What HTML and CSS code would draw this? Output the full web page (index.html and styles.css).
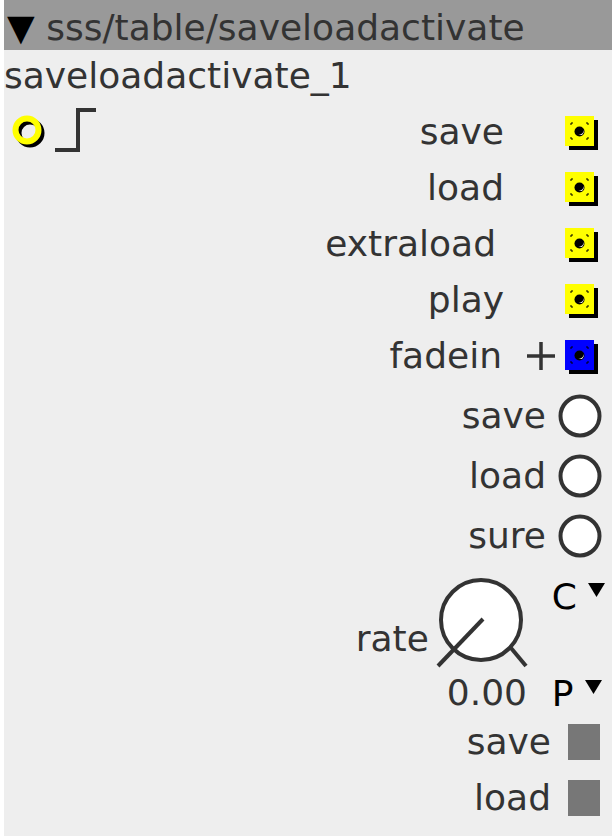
FILE: index.html
```html
<!DOCTYPE html>
<html>
<head>
<meta charset="utf-8">
<link rel="stylesheet" href="styles.css">
</head>
<body>
<div class="panel">
  <div class="header"><span class="tri">▼</span> sss/table/saveloadactivate</div>
  <div class="name">saveloadactivate_1</div>
  <div class="main">
    <div class="left">
      <div class="inlet-row">
        <svg class="inlet" width="42" height="42" viewBox="0 0 42 42">
          <circle cx="20" cy="20" r="11.5" fill="none" stroke="#000" stroke-width="6"/>
          <circle cx="17" cy="17" r="11.5" fill="none" stroke="#ffff00" stroke-width="6"/>
        </svg>
        <svg class="step" width="48" height="48" viewBox="0 0 48 48">
          <path d="M0 44 H23 V4 H41" fill="none" stroke="#333" stroke-width="4"/>
        </svg>
      </div>
    </div>
    <div class="right">
      <div class="orow"><span class="lbl">save</span><span class="plus"></span>
        <svg class="obox" width="34" height="35" viewBox="0 0 34 35"><rect x="4" y="4" width="29" height="30" fill="#000"/><rect x="0" y="0" width="29" height="30" fill="#ffff00"/><path d="M6 9V7H8M21 7H23V9M6 21V23H8M21 23H23V21" fill="none" stroke="#000" stroke-width="1"/><circle cx="14.5" cy="15.5" r="5" fill="#000"/><path d="M13.5 18.5 A3.5 3.5 0 0 0 18.5 14 A4 4 0 0 1 13.5 18.5Z" fill="#fff"/></svg></div>
      <div class="orow"><span class="lbl">load</span><span class="plus"></span>
        <svg class="obox" width="34" height="35" viewBox="0 0 34 35"><rect x="4" y="4" width="29" height="30" fill="#000"/><rect x="0" y="0" width="29" height="30" fill="#ffff00"/><path d="M6 9V7H8M21 7H23V9M6 21V23H8M21 23H23V21" fill="none" stroke="#000" stroke-width="1"/><circle cx="14.5" cy="15.5" r="5" fill="#000"/><path d="M13.5 18.5 A3.5 3.5 0 0 0 18.5 14 A4 4 0 0 1 13.5 18.5Z" fill="#fff"/></svg></div>
      <div class="orow"><span class="lbl lbl-ex">extraload</span><span class="plus"></span>
        <svg class="obox" width="34" height="35" viewBox="0 0 34 35"><rect x="4" y="4" width="29" height="30" fill="#000"/><rect x="0" y="0" width="29" height="30" fill="#ffff00"/><path d="M6 9V7H8M21 7H23V9M6 21V23H8M21 23H23V21" fill="none" stroke="#000" stroke-width="1"/><circle cx="14.5" cy="15.5" r="5" fill="#000"/><path d="M13.5 18.5 A3.5 3.5 0 0 0 18.5 14 A4 4 0 0 1 13.5 18.5Z" fill="#fff"/></svg></div>
      <div class="orow"><span class="lbl">play</span><span class="plus"></span>
        <svg class="obox" width="34" height="35" viewBox="0 0 34 35"><rect x="4" y="4" width="29" height="30" fill="#000"/><rect x="0" y="0" width="29" height="30" fill="#ffff00"/><path d="M6 9V7H8M21 7H23V9M6 21V23H8M21 23H23V21" fill="none" stroke="#000" stroke-width="1"/><circle cx="14.5" cy="15.5" r="5" fill="#000"/><path d="M13.5 18.5 A3.5 3.5 0 0 0 18.5 14 A4 4 0 0 1 13.5 18.5Z" fill="#fff"/></svg></div>
      <div class="orow"><span class="lbl lbl-fd">fadein</span><span class="plus"><svg width="30" height="30" viewBox="0 0 30 30"><path d="M1 15H29M15 1V29" stroke="#333" stroke-width="3.5"/></svg></span>
        <svg class="obox" width="34" height="35" viewBox="0 0 34 35"><rect x="4" y="4" width="29" height="30" fill="#000"/><rect x="0" y="0" width="29" height="30" fill="#0000ff"/><path d="M6 9V7H8M21 7H23V9M6 21V23H8M21 23H23V21" fill="none" stroke="#000" stroke-width="1"/><circle cx="14.5" cy="15.5" r="5" fill="#000"/><path d="M13.5 18.5 A3.5 3.5 0 0 0 18.5 14 A4 4 0 0 1 13.5 18.5Z" fill="#fff"/></svg></div>

      <div class="trow first"><span class="lbl">save</span>
        <svg class="tog" width="44" height="44" viewBox="0 0 44 44"><circle cx="22" cy="22" r="19.5" fill="#fff" stroke="#333" stroke-width="4"/></svg></div>
      <div class="trow"><span class="lbl">load</span>
        <svg class="tog" width="44" height="44" viewBox="0 0 44 44"><circle cx="22" cy="22" r="19.5" fill="#fff" stroke="#333" stroke-width="4"/></svg></div>
      <div class="trow"><span class="lbl">sure</span>
        <svg class="tog" width="44" height="44" viewBox="0 0 44 44"><circle cx="22" cy="22" r="19.5" fill="#fff" stroke="#333" stroke-width="4"/></svg></div>

      <div class="krow">
        <span class="lbl klbl">rate</span>
        <div class="kcol">
          <svg class="knob" width="96" height="94" viewBox="0 0 96 94">
            <circle cx="47" cy="44" r="40" fill="#fff" stroke="#333" stroke-width="4"/>
            <line x1="49" y1="43" x2="4" y2="90" stroke="#333" stroke-width="4"/>
            <line x1="77" y1="72" x2="92" y2="90" stroke="#333" stroke-width="4"/>
          </svg>
          <span class="lbl kval">0.00</span>
        </div>
        <div class="dcol">
          <div class="dd"><span>C</span><svg width="17" height="14" viewBox="0 0 17 14"><polygon points="0,0 17,0 8.5,14" fill="#000"/></svg></div>
          <div class="dd dd2"><span>P</span><svg width="17" height="14" viewBox="0 0 17 14"><polygon points="0,0 17,0 8.5,14" fill="#000"/></svg></div>
        </div>
      </div>

      <div class="grow"><span class="lbl">save</span><span class="gsq"></span></div>
      <div class="grow"><span class="lbl">load</span><span class="gsq"></span></div>
    </div>
  </div>
</div>
</body>
</html>
```

FILE: styles.css
```css
html, body {
  margin: 0;
  padding: 0;
  background: #fff;
}
body {
  font-family: "DejaVu Sans", sans-serif;
  color: #333;
}
.panel {
  margin: 0 4px;
  width: 608px;
  height: 836px;
  background: #eeeeee;
  display: flex;
  flex-direction: column;
  overflow: hidden;
}
.header {
  background: #999999;
  height: 50px;
  box-sizing: border-box;
  padding: 6px 0 0 3px;
  font-size: 36px;
  line-height: 44px;
  white-space: nowrap;
  color: #333;
}
.tri {
  color: #000;
}
.name {
  font-size: 36px;
  line-height: 44px;
  padding-top: 4px;
  height: 54px;
  box-sizing: border-box;
  white-space: nowrap;
}
.main {
  display: flex;
  flex: 1;
}
.left {
  display: flex;
  flex-direction: column;
}
.inlet-row {
  height: 56px;
  display: flex;
  align-items: center;
}
.inlet {
  margin-left: 6px;
  margin-top: 4px;
}
.step {
  margin-left: 3px;
  margin-top: -4px;
}
.right {
  margin-left: auto;
  display: flex;
  flex-direction: column;
  align-items: flex-end;
}
.lbl {
  font-size: 36px;
  line-height: 40px;
  white-space: nowrap;
}
.lbl-ex {
  margin-right: 8px;
}
.lbl-fd {
  margin-right: 2px;
}
.orow {
  height: 56px;
  display: flex;
  align-items: center;
  margin-right: 13px;
}
.plus {
  width: 30px;
  height: 30px;
  margin: 0 9px 0 22px;
  display: flex;
  align-items: center;
  justify-content: center;
}
.plus svg {
  display: block;
}
.obox {
  display: block;
  margin-top: 3px;
}
.trow {
  height: 60px;
  display: flex;
  align-items: center;
  margin-right: 10px;
}
.trow.first {
  margin-top: 2px;
}
.tog {
  display: block;
  margin-left: 12px;
}
.krow {
  height: 148px;
  display: flex;
  align-items: flex-start;
  margin-right: 7px;
}
.klbl {
  margin-top: 53px;
  margin-right: 5px;
}
.kcol {
  display: flex;
  flex-direction: column;
  align-items: flex-start;
  width: 96px;
}
.knob {
  display: block;
  margin-top: 10px;
}
.kval {
  margin-top: 3px;
  margin-left: 13px;
}
.dcol {
  display: flex;
  flex-direction: column;
  margin-left: 22px;
  margin-top: 11px;
}
.dd {
  display: flex;
  align-items: flex-start;
  height: 40px;
  font-size: 36px;
  line-height: 40px;
  color: #000;
}
.dd svg {
  margin-left: 11px;
  margin-top: 6px;
}
.dd2 {
  margin-top: 57px;
}
.grow {
  height: 56px;
  display: flex;
  align-items: center;
  margin-right: 12px;
}
.gsq {
  width: 32px;
  height: 36px;
  background: #777;
  margin-left: 17px;
}
```
